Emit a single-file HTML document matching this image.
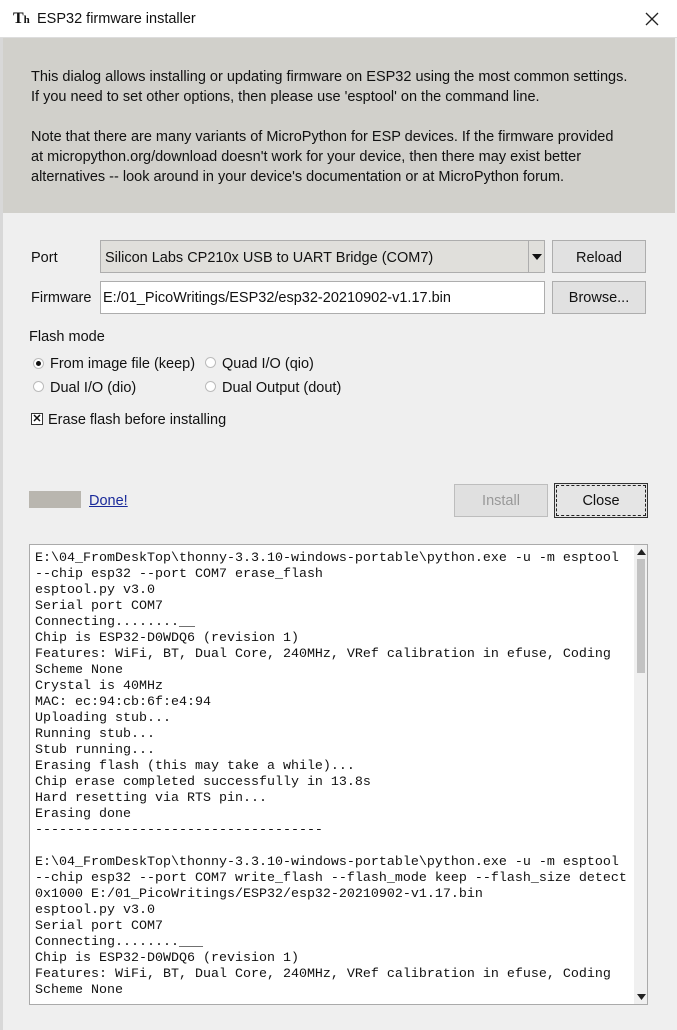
<!DOCTYPE html>
<html><head><meta charset="utf-8"><style>
*{box-sizing:border-box;margin:0;padding:0}
body{width:677px;height:1030px;background:#efefef;position:relative;overflow:hidden;font-family:"Liberation Sans",sans-serif;color:#111}
.abs{position:absolute}
.title{left:0;top:0;width:677px;height:38px;background:#fff;border-bottom:1px solid #ddd}
.info{left:3px;top:38px;width:672px;height:175px;background:#d1d0cb;font-size:14.5px;line-height:20px;padding:29px 0 0 28px}
.lbl{font-size:14.5px}
.btn{background:#e1e1e1;border:1px solid #adadad;font-size:14.5px;text-align:center}
.rad{width:11px;height:11px;border-radius:50%;border:1px solid #bbb;background:#fff}
pre{font-family:"Liberation Mono",monospace;font-size:13.33px;line-height:16px;color:#111}
</style></head><body>
<div class="abs" style="left:0;top:0;width:3px;height:1030px;background:#d8d8d8"></div>
<div class="abs title">
 <div class="abs" style="left:13px;top:10px;font-weight:bold;font-size:16px;font-family:'Liberation Serif',serif">T<span style="font-size:11px">h</span></div>
 <div class="abs" style="left:37px;top:11px;font-size:14.5px">ESP32 firmware installer</div>
 <svg class="abs" style="left:645px;top:12px" width="14" height="14"><path d="M1 1L13 13M13 1L1 13" stroke="#222" stroke-width="1.3"/></svg>
</div>
<div class="abs info">This dialog allows installing or updating firmware on ESP32 using the most common settings.<br>If you need to set other options, then please use 'esptool' on the command line.<br><br>Note that there are many variants of MicroPython for ESP devices. If the firmware provided<br>at micropython.org/download doesn't work for your device, then there may exist better<br>alternatives -- look around in your device's documentation or at MicroPython forum.</div>

<div class="abs lbl" style="left:31px;top:250px">Port</div>
<div class="abs" style="left:100px;top:240px;width:445px;height:33px;background:#e0dfdb;border:1px solid #adadad"></div>
<div class="abs lbl" style="left:105px;top:250px">Silicon Labs CP210x USB to UART Bridge (COM7)</div>
<div class="abs" style="left:528px;top:241px;width:1px;height:31px;background:#adadad"></div>
<svg class="abs" style="left:532px;top:254px" width="10" height="6"><path d="M0 0H10L5 6Z" fill="#111"/></svg>
<div class="abs btn" style="left:552px;top:240px;width:94px;height:33px;line-height:35px">Reload</div>

<div class="abs lbl" style="left:31px;top:290px">Firmware</div>
<div class="abs" style="left:100px;top:281px;width:445px;height:33px;background:#fff;border:1px solid #adadad"></div>
<div class="abs lbl" style="left:103px;top:290px">E:/01_PicoWritings/ESP32/esp32-20210902-v1.17.bin</div>
<div class="abs btn" style="left:552px;top:281px;width:94px;height:33px;line-height:33px">Browse...</div>

<div class="abs lbl" style="left:29px;top:329px">Flash mode</div>
<div class="abs rad" style="left:33px;top:358px"><div style="width:5px;height:5px;border-radius:50%;background:#111;margin:2px"></div></div>
<div class="abs lbl" style="left:50px;top:356px">From image file (keep)</div>
<div class="abs rad" style="left:205px;top:357px"></div>
<div class="abs lbl" style="left:222px;top:356px">Quad I/O (qio)</div>
<div class="abs rad" style="left:33px;top:381px"></div>
<div class="abs lbl" style="left:50px;top:380px">Dual I/O (dio)</div>
<div class="abs rad" style="left:205px;top:381px"></div>
<div class="abs lbl" style="left:222px;top:380px">Dual Output (dout)</div>
<div class="abs" style="left:31px;top:413px;width:12px;height:12px;border:1px solid #333;background:#fff;font-size:11px;line-height:10px;text-align:center;font-weight:bold">✕</div>
<div class="abs lbl" style="left:48px;top:412px">Erase flash before installing</div>

<div class="abs" style="left:29px;top:491px;width:52px;height:17px;background:#b9b6af"></div>
<div class="abs lbl" style="left:89px;top:493px;color:#1a2a9a;text-decoration:underline">Done!</div>
<div class="abs btn" style="left:454px;top:484px;width:94px;height:33px;line-height:33px;color:#999;background:#e0e0e0;border-color:#bdbdbd">Install</div>
<div class="abs btn" style="left:554px;top:483px;width:94px;height:35px;line-height:34px;border:1px solid #333;background:#e5e5e5"><div style="position:absolute;left:1px;top:1px;right:1px;bottom:1px;border:1px dashed #222"></div>Close</div>

<div class="abs" style="left:29px;top:544px;width:619px;height:461px;background:#fff;border:1px solid #aaa;overflow:hidden">
<pre style="position:absolute;left:5px;top:6px">E:\04_FromDeskTop\thonny-3.3.10-windows-portable\python.exe -u -m esptool
--chip esp32 --port COM7 erase_flash
esptool.py v3.0
Serial port COM7
Connecting........__
Chip is ESP32-D0WDQ6 (revision 1)
Features: WiFi, BT, Dual Core, 240MHz, VRef calibration in efuse, Coding
Scheme None
Crystal is 40MHz
MAC: ec:94:cb:6f:e4:94
Uploading stub...
Running stub...
Stub running...
Erasing flash (this may take a while)...
Chip erase completed successfully in 13.8s
Hard resetting via RTS pin...
Erasing done
------------------------------------

E:\04_FromDeskTop\thonny-3.3.10-windows-portable\python.exe -u -m esptool
--chip esp32 --port COM7 write_flash --flash_mode keep --flash_size detect
0x1000 E:/01_PicoWritings/ESP32/esp32-20210902-v1.17.bin
esptool.py v3.0
Serial port COM7
Connecting........___
Chip is ESP32-D0WDQ6 (revision 1)
Features: WiFi, BT, Dual Core, 240MHz, VRef calibration in efuse, Coding
Scheme None</pre>
<div class="abs" style="left:604px;top:0;width:14px;height:459px;background:#f0f0f0"></div>
<svg class="abs" style="left:607px;top:4px" width="9" height="6"><path d="M0 6H9L4.5 0Z" fill="#222"/></svg>
<div class="abs" style="left:607px;top:14px;width:8px;height:114px;background:#c2c2c2"></div>
<svg class="abs" style="left:607px;top:449px" width="9" height="6"><path d="M0 0H9L4.5 6Z" fill="#222"/></svg>
</div>
</body></html>
